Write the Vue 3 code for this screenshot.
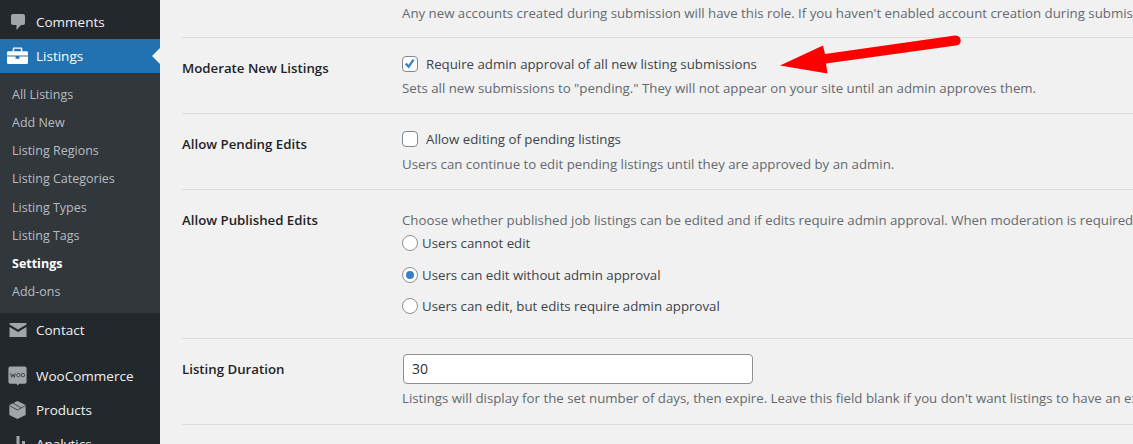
<template>
  <div class="page">
    <aside class="sidebar">
      <div class="item first">
        <svg class="ico" viewBox="0 0 20 20"><path fill="#a0a5aa" d="M5 2h10a2 2 0 0 1 2 2v7a2 2 0 0 1-2 2h-2l-4.500 5v-5H5a2 2 0 0 1-2-2V4a2 2 0 0 1 2-2z"/></svg>
        <span>Comments</span>
      </div>
      <div class="item current">
        <svg class="ico wide" viewBox="0 0 22 20"><path fill="#fff" d="M7 1h8a1 1 0 0 1 1 1v3h4.500A1.500 1.500 0 0 1 22 6.500V9.500H0V6.500A1.500 1.500 0 0 1 1.500 5H6V2a1 1 0 0 1 1-1zm.500 1.500V5h7V2.500zM0 10.500h9V13h4v-2.500h9V17a1.500 1.500 0 0 1-1.500 1.500h-19A1.500 1.500 0 0 1 0 17z"/></svg>
        <span>Listings</span>
        <i class="notch"></i>
      </div>
      <nav class="sub">
        <a v-for="s in subs" :key="s" :class="{ on: s === 'Settings' }">{{ s }}</a>
      </nav>
      <div class="item contact">
        <svg class="ico" viewBox="0 0 20 20"><path fill="#a0a5aa" d="M2 3h16a.5.5 0 0 1 .5.5V4.500l-8.500 5-8.500-5v-1A.5.500 0 0 1 2 3zm-.5 4 8.500 5 8.500-5v10H1.500z"/></svg>
        <span>Contact</span>
      </div>
      <div class="item woo">
        <svg class="ico wide" viewBox="0 0 22 22"><path fill="#a0a5aa" d="M3 .5h16A2 2 0 0 1 21 2.500v15a2 2 0 0 1-2 2h-6l-2 2-1-2H3a2 2 0 0 1-2-2v-15a2 2 0 0 1 2-2z"/><path fill="none" stroke="#3c434a" stroke-width="1.100" d="M3.500 8l1 4.500 1.500-3.500 1.500 3.500 1-4.500"/><circle cx="12" cy="10" r="1.900" fill="none" stroke="#3c434a"/><circle cx="17" cy="10" r="1.900" fill="none" stroke="#3c434a"/></svg>
        <span>WooCommerce</span>
      </div>
      <div class="item prod">
        <svg class="ico wide" viewBox="0 0 22 22"><path fill="#a0a5aa" d="M11 1l9 4.500v11L11 21l-9-4.500v-11z"/><path fill="none" stroke="#23282d" stroke-width=".8" d="M2 6l9 5 9-5M6 3.500l9 5"/></svg>
        <span>Products</span>
      </div>
      <div class="item ana">
        <svg class="ico" viewBox="0 0 20 20"><path fill="#a0a5aa" d="M3 10h3v8H3zM8.500 2h3v16h-3zM14 7h3v11h-3z"/></svg>
        <span>Analytics</span>
      </div>
    </aside>

    <main class="content">
      <section class="row top">
        <div class="label"></div>
        <div class="field"><p class="desc">Any new accounts created during submission will have this role. If you haven't enabled account creation during submission, this setting has no effect.</p></div>
      </section>

      <section class="row moderate">
        <div class="label">Moderate New Listings</div>
        <div class="field">
          <label class="check">
            <span class="box">
              <svg viewBox="0 0 16 16"><path fill="none" stroke="#3582c4" stroke-width="2.600" d="M3 7.500l3.500 3.500 5.500-8"/></svg>
            </span>
            Require admin approval of all new listing submissions
          </label>
          <p class="desc">Sets all new submissions to "pending." They will not appear on your site until an admin approves them.</p>
        </div>
        <svg class="arrow" width="195" height="50" viewBox="0 0 195 50">
          <path fill="#f00" d="M5 35.500L48 15.500 50 24 180 5.500C187 5 188 15 181 15.500L51 33.500 52.500 43.500z"/>
        </svg>
      </section>

      <section class="row pending">
        <div class="label">Allow Pending Edits</div>
        <div class="field">
          <label class="check"><span class="box"></span>Allow editing of pending listings</label>
          <p class="desc">Users can continue to edit pending listings until they are approved by an admin.</p>
        </div>
      </section>

      <section class="row published">
        <div class="label">Allow Published Edits</div>
        <div class="field">
          <p class="desc lead">Choose whether published job listings can be edited and if edits require admin approval. When moderation is required, the original job listings will be unpublished while edits await admin approval.</p>
          <div class="radios">
            <label v-for="(r, i) in radios" :key="r" class="radio">
              <span class="dot" :class="{ sel: i === 1 }"></span>{{ r }}
            </label>
          </div>
        </div>
      </section>

      <section class="row duration">
        <div class="label">Listing Duration</div>
        <div class="field">
          <div class="input">30</div>
          <p class="desc">Listings will display for the set number of days, then expire. Leave this field blank if you don't want listings to have an expiration date.</p>
        </div>
      </section>
    </main>
  </div>
</template>

<script setup>
const subs = ['All Listings', 'Add New', 'Listing Regions', 'Listing Categories', 'Listing Types', 'Listing Tags', 'Settings', 'Add-ons']
const radios = ['Users cannot edit', 'Users can edit without admin approval', 'Users can edit, but edits require admin approval']
</script>

<style>
html, body { margin: 0; background: #f1f1f1; overflow: hidden; }
</style>

<style scoped>
.page {
  display: flex;
  width: 1133px;
  height: 444px;
  overflow: hidden;
  background: #f1f1f1;
  font-family: "Open Sans", "Noto Sans", sans-serif;
  font-size: 13.250px;
  color: #3c434a;
}
.sidebar {
  flex: 0 0 160px;
  background: #23282d;
  color: #f0f0f1;
  overflow: hidden;
}
.item {
  position: relative;
  display: flex;
  align-items: center;
  height: 34px;
  font-size: 13.500px;
}
.ico { width: 20px; height: 20px; margin: 0 8px 0 8px; flex: none; }
.ico.wide { margin: 0 8px 0 7px; width: 21px; }
.first { height: 39px; padding-top: 5px; box-sizing: border-box; }
.current { background: #2271b1; color: #fff; }
.notch {
  position: absolute;
  right: 0;
  top: 9px;
  border: 8px solid transparent;
  border-right-color: #f1f1f1;
  border-left-width: 0;
}
.sub {
  display: flex;
  flex-direction: column;
  background: #32373c;
  padding: 8px 0 7px;
}
.sub a {
  height: 28.140px;
  line-height: 28px;
  padding-left: 12px;
  font-size: 12.500px;
  color: rgba(240, 246, 252, 0.7);
}
.sub a.on { color: #fff; font-weight: 700; }
.contact { margin-bottom: 12px; }
.content { flex: 1; min-width: 0; overflow: hidden; }
.row {
  position: relative;
  display: flex;
  width: 1400px;
  margin-left: 22px;
  border-bottom: 1px solid #dcdcde;
  box-sizing: border-box;
}
.label {
  flex: 0 0 220px;
  font-weight: 600;
  color: #1d2327;
  line-height: 20px;
}
.field { flex: 1; }
.desc { margin: 0; white-space: nowrap; line-height: 20px; color: #646970; }
.top { height: 38px; padding-top: 3px; }
.moderate { height: 76px; padding-top: 20px; }
.pending { height: 76px; padding-top: 20px; }
.published { height: 149px; padding-top: 20px; }
.duration { height: 86px; padding-top: 20px; }
.check { display: flex; align-items: center; height: 18px; line-height: 18px; }
.moderate .check { margin-top: -3px; margin-bottom: 5px; }
.pending .check { margin-top: -4px; margin-bottom: 6px; }
.box {
  width: 16px;
  height: 16px;
  box-sizing: border-box;
  border: 1px solid #7e8993;
  border-radius: 4px;
  background: #fff;
  margin-right: 8px;
  flex: none;
  display: flex;
}
.box svg { width: 100%; height: 100%; }
.arrow { position: absolute; left: 593px; top: -8px; overflow: visible; }
.radios { display: flex; flex-direction: column; margin-top: -3px; }
.radio { display: flex; align-items: center; height: 31.500px; line-height: 20px; }
.radio:nth-child(2) { height: 32px; margin-top: 0.500px; margin-bottom: -0.500px; }
.dot {
  width: 16px;
  height: 16px;
  box-sizing: border-box;
  border: 1px solid #8c8f94;
  border-radius: 50%;
  background: #fff;
  margin-right: 4px;
  flex: none;
  display: flex;
  align-items: center;
  justify-content: center;
}
.dot.sel::before {
  content: "";
  width: 8px;
  height: 8px;
  border-radius: 50%;
  background: #3582c4;
}
.input {
  width: 350px;
  height: 30px;
  box-sizing: border-box;
  border: 1px solid #8c8f94;
  border-radius: 4px;
  background: #fff;
  padding: 0 8px;
  line-height: 28px;
  font-size: 14px;
  color: #2c3338;
  margin: -5px 0 4px 1px;
}
</style>
